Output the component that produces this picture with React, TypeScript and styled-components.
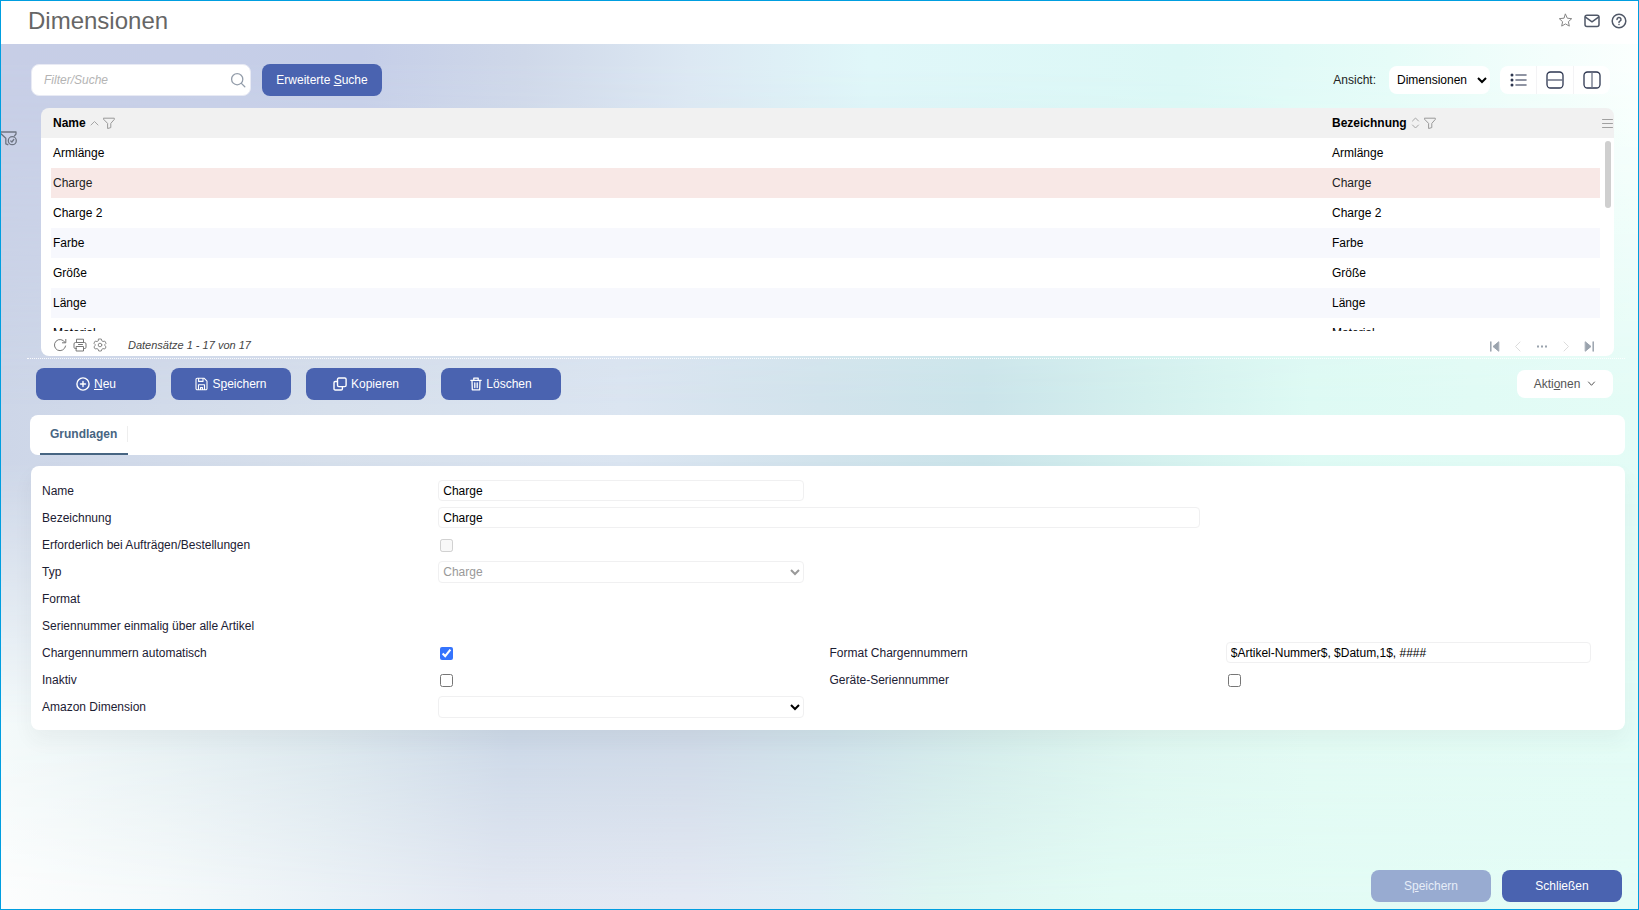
import React, { useState } from "react";
import styled, { createGlobalStyle, css } from "styled-components";

const GlobalStyle = createGlobalStyle`
  *, *::before, *::after { box-sizing: border-box; }
  body {
    margin: 0;
    font-family: "Liberation Sans", Arial, Helvetica, sans-serif;
    font-size: 12px;
    line-height: 16px;
    color: #000;
  }
  button, input, select { font: inherit; }
`;

const Page = styled.div`
  display: flex;
  flex-direction: column;
  min-height: 100vh;
  border: 1px solid #009ee0;
`;

const TopBar = styled.header`
  display: flex;
  align-items: center;
  justify-content: space-between;
  height: 43px;
  padding: 0 11px 4px 27px;
  background: #fff;
`;

const Title = styled.h1`
  margin: 0;
  font-size: 24px;
  line-height: 28px;
  font-weight: 400;
  color: #666;
`;

const TopActions = styled.div`
  display: flex;
  align-items: center;
  gap: 11px;
`;

const IconButton = styled.button<{ $tone?: string }>`
  display: inline-flex;
  align-items: center;
  justify-content: center;
  padding: 0;
  border: 0;
  background: none;
  color: ${(p) => p.$tone ?? "#777"};
  cursor: pointer;
  svg { display: block; }
`;

const Workspace = styled.main`
  position: relative;
  isolation: isolate;
  display: flex;
  flex: 1;
  flex-direction: column;
  padding-top: 20px;
`;

/* Soft colour bands that blend into each other down the page. */
const Band = styled.div<{ $colors: string; $fade?: string }>`
  position: absolute;
  inset: 0;
  z-index: -1;
  background: linear-gradient(${(p) => p.$colors});
  ${(p) => p.$fade && css`mask-image: linear-gradient(${p.$fade});`}
`;

const SearchRow = styled.div`
  display: flex;
  align-items: center;
  padding: 0 28px 0 30px;
  height: 32px;
`;

const SearchBox = styled.div`
  display: flex;
  align-items: center;
  width: 220px;
  height: 32px;
  margin-right: 11px;
  padding: 0 4px 0 12px;
  border: 1px solid #e8eaf4;
  border-radius: 8px;
  background: #fff;
`;

const SearchInput = styled.input`
  flex: 1;
  min-width: 0;
  padding: 0;
  border: 0;
  outline: 0;
  background: none;
  &::placeholder { color: #b4b4b4; font-style: italic; opacity: 1; }
`;

const PrimaryButton = styled.button`
  display: inline-flex;
  align-items: center;
  justify-content: center;
  gap: 4px;
  width: 120px;
  height: 32px;
  padding: 0;
  border: 0;
  border-radius: 8px;
  background: #4a63b0;
  color: #fff;
  cursor: pointer;
  &:disabled { background: #98abd1; color: #e6edf8; }
`;

const ViewTools = styled.div`
  display: flex;
  align-items: center;
  margin-left: auto;
`;

const ViewLabel = styled.label`
  margin-right: 13px;
  color: #222;
`;

const ViewSelect = styled.select`
  width: 101px;
  height: 28px;
  margin-right: 10px;
  padding: 0 0 0 4px;
  border: 0;
  border-radius: 8px;
  background-color: #fff;
  color: #000;
`;

const ViewGroup = styled.div`
  display: flex;
  width: 110px;
  height: 28px;
  border-radius: 8px;
  background: #fff;
`;

const ViewButton = styled(IconButton)`
  flex: 1;
  color: #2d3650;
  & + & { border-left: 1px solid #f3f3f5; }
`;

const ListSection = styled.section`
  display: flex;
  align-items: flex-start;
  margin-top: 12px;
  padding-right: 24px;
`;

const FilterRail = styled.div`
  width: 40px;
  padding-top: 23px;
`;

const ListCard = styled.div`
  flex: 1;
  border-radius: 8px;
  overflow: hidden;
  background: linear-gradient(#f1f1f1 30px, #fff 30px);
`;

const ListBody = styled.div`
  display: flex;
  height: 223px;
`;

const TableClip = styled.div`
  flex: 1;
  margin-left: 10px;
  overflow: hidden;
`;

const DataTable = styled.table`
  width: 100%;
  border-collapse: collapse;
  table-layout: fixed;
  th, td {
    height: 30px;
    padding: 0 2px;
    text-align: left;
    line-height: 16px;
  }
`;

const DataRow = styled.tr<{ $selected: boolean }>`
  background: #fff;
  &:nth-child(even) { background: #f7f8fd; }
  ${(p) => p.$selected && css`&&, &&:nth-child(even) { background: #f8e8e6; color: #222; }`}
`;

const NameColumn = styled.col``;
const DescriptionColumn = styled.col` width: 270px; `;

const HeadCell = styled.div`
  display: flex;
  align-items: center;
  gap: 4px;
`;

const ScrollRail = styled.div`
  display: flex;
  flex-direction: column;
  align-items: center;
  width: 14px;
`;

const RailMenu = styled(IconButton)`
  height: 30px;
  margin-bottom: 3px;
`;

const Thumb = styled.div`
  width: 6px;
  height: 67px;
  margin-left: 2px;
  border-radius: 3px;
  background: #cfcfcf;
`;

const ListFooter = styled.div`
  display: flex;
  align-items: center;
  justify-content: space-between;
  height: 25px;
  padding: 0 19px 0 12px;
`;

const FooterTools = styled.div`
  display: flex;
  align-items: center;
  gap: 6px;
  padding-top: 3px;
`;

const RecordInfo = styled.span`
  margin-left: 15px;
  font-size: 11px;
  font-style: italic;
  color: #444;
`;

const Pager = styled.div`
  display: flex;
  align-items: center;
  gap: 10px;
  padding-top: 5px;
`;

const Divider = styled.hr`
  margin: 2px 13px 0 26px;
  border: 0;
  border-top: 1px dotted rgba(255, 255, 255, 0.9);
  align-self: stretch;
`;

const ActionRow = styled.div`
  display: flex;
  align-items: center;
  gap: 15px;
  margin-top: 9px;
  padding: 0 25px 0 35px;
`;

const MenuButton = styled.button`
  display: inline-flex;
  align-items: center;
  justify-content: center;
  gap: 7px;
  width: 96px;
  height: 28px;
  margin-left: auto;
  padding: 0;
  border: 0;
  border-radius: 8px;
  background: #fff;
  color: #555;
  cursor: pointer;
`;

const TabBar = styled.nav`
  display: flex;
  height: 40px;
  margin: 15px 13px 0 29px;
  padding-left: 10px;
  border-radius: 8px;
  background: #fff;
`;

const Tab = styled.button`
  display: flex;
  align-items: center;
  height: 40px;
  padding: 0;
  border: 0;
  border-bottom: 2px solid #476582;
  background: none;
  color: #476582;
  font-weight: 700;
  span { padding: 0 10px; border-right: 1px solid #eee; }
`;

const FormCard = styled.form`
  display: grid;
  grid-template-columns: 370fr 365fr 370fr 365fr;
  grid-auto-rows: 27px;
  column-gap: 26px;
  align-items: center;
  margin: 11px 13px 0 30px;
  padding: 11px 34px 10px 11px;
  border-radius: 8px;
  background: #fff;
  box-shadow: 0 10px 20px rgba(60, 60, 60, 0.05);
`;

const FieldLabel = styled.label`
  grid-column: 1;
  color: #1c2033;
  white-space: nowrap;
`;

const SideLabel = styled(FieldLabel)` grid-column: 3; `;

const fieldFrame = css`
  width: 100%;
  border: 1px solid #f0f0f1;
  border-radius: 4px;
  background-color: #fff;
  color: #000;
`;

const TextField = styled.input<{ $wide?: boolean }>`
  ${fieldFrame}
  grid-column: ${(p) => (p.$wide ? "2 / span 2" : "auto")};
  height: 21px;
  padding: 1px 4px 0;
`;

const SelectField = styled.select`
  ${fieldFrame}
  height: 22px;
  padding: 0;
  &:disabled { color: #999; opacity: 1; }
`;

const Tick = styled.input`
  width: 13px;
  height: 13px;
  margin: 1px 0 0 2px;
  accent-color: #3574fd;
`;

const BottomBar = styled.footer`
  display: flex;
  justify-content: flex-end;
  gap: 11px;
  margin-top: auto;
  padding: 20px 16px 7px;
`;

type SvgProps = { w: number; h: number; sw?: number; children: React.ReactNode };
const Svg = ({ w, h, sw = 1, children }: SvgProps) => (
  <svg width={w} height={h} viewBox={`0 0 ${w} ${h}`} fill="none" stroke="currentColor"
    strokeWidth={sw} strokeLinecap="round" strokeLinejoin="round" aria-hidden="true">
    {children}
  </svg>
);

const StarIcon = () => (
  <Svg w={15} h={15}><path d="M7.5 1.2l1.8 4 4.4.5-3.3 3 .9 4.4-3.8-2.2-3.8 2.2.9-4.4-3.3-3 4.4-.5z" /></Svg>
);
const MailIcon = () => (
  <Svg w={16} h={16} sw={1.5}><rect x="1" y="2.2" width="14" height="11.4" rx="2" /><path d="M1.5 4.2L8 8.8l6.500-4.600" /></Svg>
);
const HelpIcon = () => (
  <Svg w={16} h={16} sw={1.5}><circle cx="8" cy="8" r="6.800" /><path d="M6 6.500a2 2 0 1 1 2.900 1.700c-.6.3-.9.6-.9 1.200" /><path d="M8 11.400v.1" /></Svg>
);
const SearchIcon = () => (
  <Svg w={16} h={16} sw={1.3}><circle cx="7.200" cy="7.200" r="5.600" /><path d="M11.400 11.400l3.400 3.400" /></Svg>
);
const ListIcon = () => (
  <Svg w={17} h={14} sw={1.6}>
    <path stroke="#6b7285" d="M6 2h10M6 7h10M6 12h10" />
    <g fill="currentColor" stroke="none"><circle cx="2" cy="2" r="1.500" /><circle cx="2" cy="7" r="1.500" /><circle cx="2" cy="12" r="1.500" /></g>
  </Svg>
);
const SplitRowsIcon = () => (
  <Svg w={18} h={18} sw={1.3}><rect x="1" y="1" width="16" height="16" rx="3.500" /><path stroke="#6b7285" d="M1.500 9h15" /></Svg>
);
const SplitColumnsIcon = () => (
  <Svg w={18} h={18} sw={1.3}><rect x="1" y="1" width="16" height="16" rx="3.500" /><path stroke="#6b7285" d="M9 1.500v15" /></Svg>
);
const FunnelIcon = () => (
  <Svg w={12} h={12}><path d="M.7 1.200h10.600v1.200L7.800 6.400v4.200l-3.200.9V6.400L.7 2.400z" /></Svg>
);
const ActiveFilterIcon = () => (
  <Svg w={16} h={15} sw={1.3}>
    <path d="M0 1h15M15 1v2l-1.500 1.800M0 2.800l4.800 4.400v5.600l2 .9" />
    <circle cx="11.300" cy="9.700" r="4" /><path d="M9.800 10l1.100 1 1.900-2.500" />
  </Svg>
);
const SortUpIcon = () => <Svg w={9} h={12}><path d="M1 8l3.500-3.500L8 8" /></Svg>;
const SortBothIcon = () => <Svg w={9} h={12}><path d="M1.500 4l3-3 3 3M1.500 8l3 3 3-3" /></Svg>;
const MenuIcon = () => <Svg w={11} h={10}><path d="M.5 1.500h10M.5 5.500h10M.5 9.500h10" /></Svg>;
const RefreshIcon = () => <Svg w={14} h={14}><path d="M12 4.400A5.600 5.600 0 1 0 12.600 8M12.800 1.400v3.400H9.400" /></Svg>;
const PrintIcon = () => (
  <Svg w={14} h={14}>
    <path d="M3.500 4.500V1.200h7v3.300M3.500 10.500H2.200a1.200 1.200 0 0 1-1.200-1.200V6a1.500 1.500 0 0 1 1.500-1.500h9A1.500 1.500 0 0 1 13 6v3.300a1.200 1.200 0 0 1-1.200 1.200h-1.300M5.500 6.500h4" />
    <path d="M3.500 8.500h7v4.500h-7z" />
  </Svg>
);
const GearIcon = () => (
  <Svg w={14} h={14}>
    <path d="M5.700 1h2.600l.5 1.800 1.200.7 1.800-.4 1.300 2.200L11.800 6.600v1l1.300 1.200-1.300 2.200-1.800-.4-1.200.7-.5 1.700H5.700l-.5-1.700-1.200-.7-1.800.4L.9 8.800l1.300-1.200v-1L.9 5.300l1.300-2.200 1.800.4 1.200-.7z" />
    <circle cx="7" cy="7" r="1.800" />
  </Svg>
);
const EdgeIcon = ({ last = false }: { last?: boolean }) => (
  <Svg w={11} h={11}>
    <path fill="currentColor" d={last ? "M1.500 1l5.500 4.500-5.500 4.500z" : "M9.500 1L4 5.500 9.500 10z"} />
    <path strokeWidth="1.500" d={last ? "M9.200 1v9" : "M1.800 1v9"} />
  </Svg>
);
const StepIcon = ({ next = false }: { next?: boolean }) => (
  <Svg w={16} h={11}><path d={next ? "M6 1l4.500 4.500L6 10" : "M10 1L5.500 5.500 10 10"} /></Svg>
);
const DotsIcon = () => (
  <Svg w={12} h={11}><g fill="currentColor" stroke="none"><rect x="1" y="4.500" width="2" height="2" /><rect x="5" y="4.500" width="2" height="2" /><rect x="9" y="4.500" width="2" height="2" /></g></Svg>
);
const PlusIcon = () => <Svg w={14} h={14} sw={1.4}><circle cx="7" cy="7" r="6.100" /><path d="M4.500 7h5M7 4.500v5" /></Svg>;
const SaveIcon = () => (
  <Svg w={13} h={14} sw={1.1}><path d="M1 2.400a1.200 1.200 0 0 1 1.200-1.200h6.800l3 3v7.400a1.200 1.200 0 0 1-1.200 1.200H2.200A1.200 1.200 0 0 1 1 11.600zM3.600 1.400v3h4.400v-3M3.500 12.600V7.800h6v4.800M5.500 12.600v-2h2v2" /></Svg>
);
const CopyIcon = () => (
  <Svg w={14} h={14} sw={1.4}><rect x="4.500" y="1" width="8.600" height="8.600" rx="1.300" /><path d="M4 4.500H2.200A1.200 1.200 0 0 0 1 5.700v6A1.200 1.200 0 0 0 2.200 13h6a1.200 1.200 0 0 0 1.200-1.200V10" /></Svg>
);
const TrashIcon = () => (
  <Svg w={12} h={14} sw={1.3}><path d="M.8 3.300h10.400M3.800 3V1.200h4.400V3M2 3.500l.3 9.300h7.400l.3-9.300M4.800 6v4.500M7.200 6v4.500" /></Svg>
);
const ChevronIcon = () => <Svg w={9} h={6}><path d="M1.500 1l3 3.300L7.500 1" /></Svg>;

const dimensions = ["Armlänge", "Charge", "Charge 2", "Farbe", "Größe", "Länge", "Material"];

export default function App() {
  const [selected, setSelected] = useState("Charge");

  return (
    <>
      <GlobalStyle />
      <Page>
        <TopBar>
          <Title>Dimensionen</Title>
          <TopActions>
            <IconButton aria-label="Favorit" $tone="#858585"><StarIcon /></IconButton>
            <IconButton aria-label="Nachricht" $tone="#505868"><MailIcon /></IconButton>
            <IconButton aria-label="Hilfe" $tone="#505868"><HelpIcon /></IconButton>
          </TopActions>
        </TopBar>
        <Workspace>
          <Band $colors="90deg, #cdd6e8, #d7e0ec 20%, #dbe5f1 38%, #d2e3ec 50%, #cbe4ea 60%, #d4f0ee 70%, #defaf4 80%, #e4fcf6" />
          <Band
            $colors="90deg, #c7cee6, #c5cee8 22%, #cfd8e9 32%, #dce8f3 42%, #e0f7f9 53%, #dcf8f6 72%, #e6fcf8 85%, #fbfffe"
            $fade="180deg, #000 2%, transparent 42%"
          />
          <Band
            $colors="90deg, #f4fafa, #eaf3f5 8%, #dce8ee 20%, #cdd9e8 31%, #cfdae8 42%, #cfe2ea 51%, #d6eeec 61%, #dff7f1 70%, #e3fbf4 80%, #e4fcf6"
            $fade="180deg, transparent 48%, #000 79%"
          />
          <Band
            $colors="90deg, #fcfdfd, #f5f9fa 10%, #ebf1f6 20%, #e3e8f2 30%, #e4e9f3 42%, #e2edf4 50%, #dff5f1 57%, #e2fbf4 68%, #e4fcf6"
            $fade="180deg, transparent 80%, #000 99%"
          />

          <SearchRow>
            <SearchBox>
              <SearchInput type="text" placeholder="Filter/Suche" aria-label="Filter/Suche" />
              <IconButton aria-label="Suchen" $tone="#939daa"><SearchIcon /></IconButton>
            </SearchBox>
            <PrimaryButton type="button"><span>Erweiterte <u>S</u>uche</span></PrimaryButton>
            <ViewTools>
              <ViewLabel htmlFor="view">Ansicht:</ViewLabel>
              <ViewSelect id="view" defaultValue="Dimensionen"><option>Dimensionen</option></ViewSelect>
              <ViewGroup>
                <ViewButton aria-label="Liste"><ListIcon /></ViewButton>
                <ViewButton aria-label="Horizontal geteilt"><SplitRowsIcon /></ViewButton>
                <ViewButton aria-label="Vertikal geteilt"><SplitColumnsIcon /></ViewButton>
              </ViewGroup>
            </ViewTools>
          </SearchRow>

          <ListSection>
            <FilterRail>
              <IconButton aria-label="Filter" $tone="#6d7482"><ActiveFilterIcon /></IconButton>
            </FilterRail>
            <ListCard>
              <ListBody>
                <TableClip>
                  <DataTable>
                    <colgroup><NameColumn /><DescriptionColumn /></colgroup>
                    <thead>
                      <tr>
                        <th scope="col">
                          <HeadCell>Name <IconButton aria-label="Name sortieren" $tone="#a5a5a5"><SortUpIcon /></IconButton><IconButton aria-label="Name filtern" $tone="#999"><FunnelIcon /></IconButton></HeadCell>
                        </th>
                        <th scope="col">
                          <HeadCell>Bezeichnung <IconButton aria-label="Bezeichnung sortieren" $tone="#a5a5a5"><SortBothIcon /></IconButton><IconButton aria-label="Bezeichnung filtern" $tone="#999"><FunnelIcon /></IconButton></HeadCell>
                        </th>
                      </tr>
                    </thead>
                    <tbody>
                      {dimensions.map((name) => (
                        <DataRow key={name} $selected={name === selected} onClick={() => setSelected(name)}>
                          <td>{name}</td>
                          <td>{name}</td>
                        </DataRow>
                      ))}
                    </tbody>
                  </DataTable>
                </TableClip>
                <ScrollRail>
                  <RailMenu aria-label="Spalten" $tone="#a0a0a0"><MenuIcon /></RailMenu>
                  <Thumb />
                </ScrollRail>
              </ListBody>
              <ListFooter>
                <FooterTools>
                  <IconButton aria-label="Aktualisieren"><RefreshIcon /></IconButton>
                  <IconButton aria-label="Drucken"><PrintIcon /></IconButton>
                  <IconButton aria-label="Einstellungen" $tone="#8a8a8a"><GearIcon /></IconButton>
                  <RecordInfo>Datensätze 1 - 17 von 17</RecordInfo>
                </FooterTools>
                <Pager>
                  <IconButton aria-label="Erste Seite" $tone="#9aa3ad"><EdgeIcon /></IconButton>
                  <IconButton aria-label="Zurück" $tone="#dcdcdc"><StepIcon /></IconButton>
                  <IconButton aria-label="Seiten" $tone="#9aa3ad"><DotsIcon /></IconButton>
                  <IconButton aria-label="Weiter" $tone="#dcdcdc"><StepIcon next /></IconButton>
                  <IconButton aria-label="Letzte Seite" $tone="#9aa3ad"><EdgeIcon last /></IconButton>
                </Pager>
              </ListFooter>
            </ListCard>
          </ListSection>
          <Divider />

          <ActionRow>
            <PrimaryButton type="button"><PlusIcon /><span><u>N</u>eu</span></PrimaryButton>
            <PrimaryButton type="button"><SaveIcon /><span>S<u>p</u>eichern</span></PrimaryButton>
            <PrimaryButton type="button"><CopyIcon /><span>Kopieren</span></PrimaryButton>
            <PrimaryButton type="button"><TrashIcon /><span>Löschen</span></PrimaryButton>
            <MenuButton type="button"><span>Akti<u>o</u>nen</span><ChevronIcon /></MenuButton>
          </ActionRow>

          <TabBar>
            <Tab type="button"><span>Grundlagen</span></Tab>
          </TabBar>

          <FormCard>
            <FieldLabel htmlFor="name">Name</FieldLabel>
            <TextField id="name" key={`n-${selected}`} defaultValue={selected} />
            <FieldLabel htmlFor="description">Bezeichnung</FieldLabel>
            <TextField id="description" $wide key={`b-${selected}`} defaultValue={selected} />
            <FieldLabel htmlFor="required">Erforderlich bei Aufträgen/Bestellungen</FieldLabel>
            <Tick id="required" type="checkbox" disabled />
            <FieldLabel htmlFor="type">Typ</FieldLabel>
            <SelectField id="type" disabled defaultValue="Charge"><option>Charge</option></SelectField>
            <FieldLabel as="span">Format</FieldLabel>
            <FieldLabel as="span">Seriennummer einmalig über alle Artikel</FieldLabel>
            <FieldLabel htmlFor="auto">Chargennummern automatisch</FieldLabel>
            <Tick id="auto" type="checkbox" defaultChecked />
            <SideLabel htmlFor="format">Format Chargennummern</SideLabel>
            <TextField id="format" defaultValue="$Artikel-Nummer$, $Datum,1$, ####" />
            <FieldLabel htmlFor="inactive">Inaktiv</FieldLabel>
            <Tick id="inactive" type="checkbox" />
            <SideLabel htmlFor="device">Geräte-Seriennummer</SideLabel>
            <Tick id="device" type="checkbox" />
            <FieldLabel htmlFor="amazon">Amazon Dimension</FieldLabel>
            <SelectField id="amazon" defaultValue=""><option value=""></option></SelectField>
          </FormCard>

          <BottomBar>
            <PrimaryButton type="button" disabled><span>S<u>p</u>eichern</span></PrimaryButton>
            <PrimaryButton type="button">Schließen</PrimaryButton>
          </BottomBar>
        </Workspace>
      </Page>
    </>
  );
}
